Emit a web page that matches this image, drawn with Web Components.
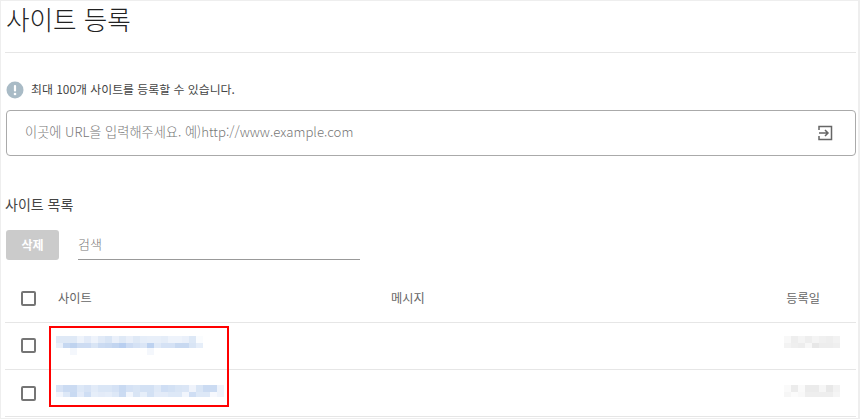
<!DOCTYPE html>
<html lang="ko">
<head>
<meta charset="utf-8">
<style>
  html, body { margin: 0; background: #fff; }
  body { font-family: "Noto Sans CJK KR", "Noto Sans", sans-serif; color: #333; }
</style>
</head>
<body>
<site-page></site-page>
<script>
const FONT = `"Noto Sans CJK KR", "Noto Sans", sans-serif`;

class NoticeLine extends HTMLElement {
  constructor() {
    super();
    this.attachShadow({mode: "open"}).innerHTML = `
    <style>
      :host { display: flex; align-items: center; gap: 7px; height: 18px; font-size: 11.9px; color: #444; }
      svg { width: 18px; height: 18px; }
      span { padding-bottom: 3px; }
    </style>
    <svg viewBox="0 0 18 18"><circle cx="9" cy="9" r="8.5" fill="#a9bbc6"/><rect x="7.9" y="4" width="2.2" height="6.6" rx="1" fill="#fff"/><circle cx="9" cy="13" r="1.3" fill="#fff"/></svg>
    <span><slot></slot></span>`;
  }
}

class UrlBox extends HTMLElement {
  constructor() {
    super();
    this.attachShadow({mode: "open"}).innerHTML = `
    <style>
      :host { display: flex; align-items: center; justify-content: space-between; box-sizing: border-box;
        height: 46px; margin-right: 0; padding: 0 22px 0 18px; border: 1px solid #aaa; border-radius: 4px;
        font-size: 13.2px; font-weight: 300; color: #777; }
      span { padding-bottom: 4px; }
      svg { width: 16px; height: 16px; }
    </style>
    <span><slot></slot></span>
    <svg viewBox="0 0 16 16" fill="none" stroke="#666" stroke-width="1.5">
      <path d="M2 5V1.5h12.5v13H2V11"/>
      <path d="M2 8h9M8 5l3 3-3 3"/>
    </svg>`;
  }
}

class FlatButton extends HTMLElement {
  constructor() {
    super();
    this.attachShadow({mode: "open"}).innerHTML = `
    <style>
      :host { display: flex; align-items: center; justify-content: center; box-sizing: border-box; width: 53px; height: 30px;
        padding-bottom: 2px; background: #cbcbcb; border-radius: 3px; color: #fff; font-size: 12px; font-weight: 700; }
    </style>
    <slot></slot>`;
  }
}

class SearchField extends HTMLElement {
  constructor() {
    super();
    this.attachShadow({mode: "open"}).innerHTML = `
    <style>
      :host { display: flex; align-items: center; box-sizing: border-box; width: 282px; height: 30px;
        padding-bottom: 2px; border-bottom: 1px solid #999; font-size: 13px; font-weight: 300; color: #777; }
    </style>
    <slot></slot>`;
  }
}

class CheckBox extends HTMLElement {
  constructor() {
    super();
    this.attachShadow({mode: "open"}).innerHTML = `
    <style>
      :host { display: block; box-sizing: border-box; width: 15px; height: 15px;
        border: 2px solid #757575; border-radius: 2px; }
    </style>`;
  }
}

// blurred-out value: rows of 7px cells, the third row is cut short
class MosaicBlur extends HTMLElement {
  constructor() {
    super();
    this.attachShadow({mode: "open"});
  }
  connectedCallback() {
    const rows = JSON.parse(this.getAttribute("rows"));
    this.shadowRoot.innerHTML = `
    <style>
      :host { display: block; }
      .r { display: flex; }
      .r i { display: block; width: 7px; height: 7px; }
      .r:nth-child(3) i { height: 5px; }
    </style>` + rows.map(r => `<div class="r">${r.map(c => `<i style="background:#${c}"></i>`).join("")}</div>`).join("");
  }
}

class SiteRow extends HTMLElement {
  constructor() {
    super();
    this.attachShadow({mode: "open"}).innerHTML = `
    <style>
      :host { display: grid; grid-template-columns: 51px 1fr 120px; align-items: center; height: 47px;
        border-bottom: 1px solid #e6e6e6; box-sizing: border-box; }
      .c { padding-left: 16px; padding-bottom: var(--check-lift, 1px); }
      .name, .date { align-self: start; padding-top: var(--blur-top, 13px); }
      .date { display: flex; justify-content: flex-end; padding-right: 16px; }
    </style>
    <div class="c"><check-box></check-box></div>
    <div class="name"><slot name="name"></slot></div>
    <div class="date"><slot name="date"></slot></div>`;
  }
}

class SitePage extends HTMLElement {
  constructor() {
    super();
    const split = s => s.split(" ");
    const nameA = [
      split("dfe9f6 dfe9f6 dfe9f6 eef3fb e3ebf8 eef3fb e1eaf7 d9e5f5 eaf0fa dfe9f6 e9eff9 dfe9f6 e6eef9 e8eff9 e8eff9 e5edf8 eef3fb eef3fb eaf0fa dde8f6 fafcfe"),
      split("e9f0fa c6d8f1 bfd3ef cddcf2 cddcf3 d9e5f5 cbdbf2 c8d9f1 c2d5f0 b9cff0 cddcf3 d5e2f5 dbe6f6 bdd2f0 dfe9f7 d5e2f5 d5e2f5 c8d9f1 c8d9f1 d9e5f5 e6eef9"),
      split("ffffff ffffff f4f7fc ffffff ffffff ffffff ffffff ffffff ffffff ffffff ffffff ffffff ffffff f4f7fc")
    ];
    const nameB = [
      split("d7e3f5 cbdbf2 cbdbf2 dde8f7 d7e3f5 e2ebf8 dae6f6 dae6f6 d5e2f5 c9daf2 d5e2f5 d9e5f5 d3e1f4 d3e1f4 dfe9f7 cfdef4 d3e1f4 d9e5f5 dbe6f6 eff3fb d9e5f5 cbdbf2 cbdbf2 eef3fb"),
      split("f1f5fc dde8f7 c9daf2 e3ebf9 cfdef4 e6eef9 e3ebf8 e5edf9 dde8f7 cbdbf2 f1f5fc d9e5f5 e6eef9 d3e1f4 e3ebf8 e3ebf8 dde8f7 dde8f7 f1f5fc cfdef4 dde8f7 dde8f7 f6f8fd eef3fb")
    ];
    const dateA = [
      split("f8f8f8 eeeeee f4f4f4 eeeeee f4f4f4 f0f0f0 eeeeee f2f2f2"),
      split("f3f3f3 efefef ededed f7f7f7 e7e7e7 ededed ededed efefef")
    ];
    const dateB = [
      split("fafafa ececec fafafa ebebeb ebebeb f6f6f6 e8e8e8 f2f2f2"),
      split("f6f6f6 fbfbfb f8f8f8 eeeeee eeeeee eeeeee eeeeee f5f5f5")
    ];
    this.attachShadow({mode: "open"}).innerHTML = `
    <style>
      :host { display: block; box-sizing: border-box; width: 860px; height: 419px; overflow: hidden;
        border: 1px solid #eee; border-right-width: 2px; padding: 0 2px 0 4px; font-family: ${FONT}; }
      h1 { margin: 0; height: 52px; box-sizing: border-box; padding: 0 0 0 1px; font-size: 25.6px; line-height: 36px;
        font-weight: 300; color: #222; border-bottom: 1px solid #e6e6e6; }
      notice-line { margin-top: 28px; margin-left: 1px; }
      url-box { margin-top: 11px; margin-left: 1px; }
      h2 { margin: 37px 0 0 0; height: 22px; font-size: 14px; line-height: 22px; font-weight: 400; color: #444; }
      .tools { display: flex; gap: 19px; margin: 15px 0 0 1px; }
      .list { margin-top: 15px; }
      .head { display: grid; grid-template-columns: 53px 1fr 120px; align-items: center; height: 48px;
        border-bottom: 1px solid #e6e6e6; box-sizing: border-box; font-size: 12.2px; color: #666; }
      .head .c { padding-left: 16px; }
      .head .cols { display: grid; grid-template-columns: 333px 1fr; padding-bottom: 2px; }
      .head .end { text-align: right; padding-right: 36px; padding-bottom: 2px; }
      .second { --blur-top: 15px; --check-lift: 0px; }
    </style>
    <h1>사이트 등록</h1>
    <notice-line>최대 100개 사이트를 등록할 수 있습니다.</notice-line>
    <url-box>이곳에 URL을 입력해주세요. 예)http://www.example.com</url-box>
    <h2>사이트 목록</h2>
    <div class="tools">
      <flat-button>삭제</flat-button>
      <search-field>검색</search-field>
    </div>
    <div class="list">
      <div class="head">
        <div class="c"><check-box></check-box></div>
        <div class="cols"><span>사이트</span><span>메시지</span></div>
        <div class="end">등록일</div>
      </div>
      <site-row>
        <mosaic-blur slot="name" rows='${JSON.stringify(nameA)}'></mosaic-blur>
        <mosaic-blur slot="date" rows='${JSON.stringify(dateA)}'></mosaic-blur>
      </site-row>
      <site-row class="second">
        <mosaic-blur slot="name" rows='${JSON.stringify(nameB)}'></mosaic-blur>
        <mosaic-blur slot="date" rows='${JSON.stringify(dateB)}'></mosaic-blur>
      </site-row>
    </div>
    <red-mark></red-mark>`;
  }
}

// annotation drawn over the table
class RedMark extends HTMLElement {
  constructor() {
    super();
    this.attachShadow({mode: "open"}).innerHTML = `
    <style>
      :host { position: absolute; left: 49px; top: 326px; width: 180px; height: 81px; box-sizing: border-box;
        border: 2px solid #f00; }
    </style>`;
  }
}

[["notice-line",NoticeLine],["url-box",UrlBox],["flat-button",FlatButton],["search-field",SearchField],
 ["check-box",CheckBox],["mosaic-blur",MosaicBlur],["site-row",SiteRow],["red-mark",RedMark],["site-page",SitePage]]
  .forEach(([n,c]) => customElements.define(n,c));
</script>
</body>
</html>
